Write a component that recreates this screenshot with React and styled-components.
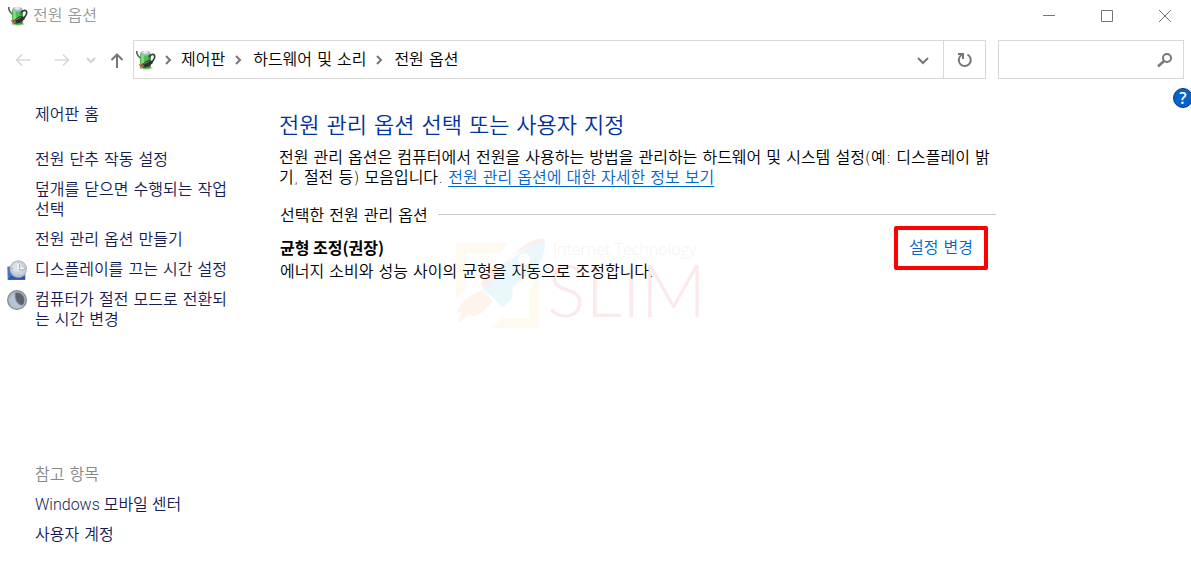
import React, { useState } from 'react';
import styled, { createGlobalStyle } from 'styled-components';

const GlobalStyle = createGlobalStyle`
  * {
    box-sizing: border-box;
  }
  body {
    margin: 0;
    background: #fff;
    color: #000;
    font-family: 'DejaVu Sans', 'Noto Sans CJK KR', sans-serif;
    font-size: 16px;
    font-weight: 350;
    line-height: 20px;
    overflow-x: hidden;
  }
  svg {
    display: block;
    flex-shrink: 0;
  }
`;

const Window = styled.div`
  min-height: 100vh;
  display: flex;
  flex-direction: column;
`;

const TitleBar = styled.header`
  display: flex;
  align-items: center;
  height: 32px;
  padding: 0 3px 0 8px;
`;

const WindowTitle = styled.span`
  flex: 1;
  margin-left: 5px;
  color: #999;
  line-height: 22px;
`;

const WindowButtons = styled.div`
  display: flex;
  gap: 12px;
`;

const IconButton = styled.button`
  display: flex;
  align-items: center;
  justify-content: center;
  width: ${(props) => props.$width || 46}px;
  padding: 0;
  border: none;
  background: none;
  color: ${(props) => props.$color || '#777'};
`;

const NavBar = styled.nav`
  display: flex;
  height: 39px;
  margin-top: 8px;
  padding: 0 7px 0 3px;
`;

const AddressBar = styled.div`
  flex: 1;
  display: flex;
  align-items: stretch;
  border: 1px solid #d9d9d9;
`;

const Crumbs = styled.div`
  flex: 1;
  display: flex;
  align-items: center;
  padding-left: 2px;
`;

const Crumb = styled.a`
  color: #000;
  text-decoration: none;
`;

const Separator = styled.span`
  display: flex;
  justify-content: center;
  width: ${(props) => (props.$first ? 25 : 28)}px;
  color: #777;
`;

const RefreshBox = styled.div`
  display: flex;
  border-left: 1px solid #d9d9d9;
`;

const SearchBox = styled.div`
  display: flex;
  align-items: center;
  width: 186px;
  margin-left: 12px;
  padding-right: 10px;
  border: 1px solid #d9d9d9;
  color: #777;
`;

const SearchInput = styled.input`
  flex: 1;
  min-width: 0;
  height: 100%;
  padding: 0 8px;
  border: none;
  outline: none;
  background: none;
  font: inherit;
`;

const Body = styled.div`
  flex: 1;
  display: flex;
`;

const Sidebar = styled.aside`
  display: flex;
  flex-direction: column;
  width: 279px;
  padding: 26px 43px 20px 7px;
`;

const TaskList = styled.ul`
  display: flex;
  flex-direction: column;
  gap: 10px;
  margin: ${(props) => (props.$bottom ? 'auto 0 0' : '25px 0 0')};
  padding: 0;
  list-style: none;
`;

const Task = styled.div`
  display: grid;
  grid-template-columns: 20px 200px;
  column-gap: 8px;
`;

const TaskIcon = styled.span`
  width: 20px;
  height: 20px;
`;

const TaskLink = styled.a`
  color: #151c55;
  text-decoration: none;
  font-family: ${(props) => (props.$latin ? "Roboto, 'Noto Sans CJK KR', sans-serif" : 'inherit')};
`;

const SeeAlso = styled.span`
  color: #888;
`;

const Content = styled.main`
  flex: 1;
  max-width: 717px;
  padding-top: 33px;
`;

const Heading = styled.h1`
  margin: 0;
  color: #003399;
  font-size: 22px;
  font-weight: 350;
  line-height: 28px;
`;

const Description = styled.p`
  margin: 8px 0 0;
`;

const InfoLink = styled.a`
  color: #0066cc;
  text-decoration: underline;
  text-decoration-thickness: 1px;
  text-underline-offset: 3px;
`;

const PlanGroup = styled.section`
  position: relative;
  margin-top: 18px;
  padding-left: 1px;
`;

const GroupTitle = styled.h2`
  display: flex;
  align-items: center;
  gap: 10px;
  margin: 0;
  font-size: 16px;
  font-weight: 350;

  &::after {
    content: '';
    flex: 1;
    height: 1px;
    margin-bottom: 3px;
    background: #c8c8c8;
  }
`;

const PlanRow = styled.div`
  display: flex;
  justify-content: space-between;
  align-items: flex-start;
  padding-right: 8px;
`;

const PlanText = styled.div`
  padding-top: 11px;
`;

const PlanName = styled.h3`
  margin: 0;
  font-family: 'Noto Sans CJK KR', sans-serif;
  font-size: 16px;
  font-weight: 700;
`;

const PlanDetail = styled.p`
  margin: 5px 0 0;
`;

const ChangeLink = styled.a`
  padding: 8px 11px;
  border: 4px solid #fe0000;
  border-radius: 2px;
  color: #0066cc;
  text-decoration: none;
`;

// sits over the plan text
const Watermark = styled.svg`
  position: absolute;
  top: 27px;
  left: 174px;
  opacity: 0.09;
  pointer-events: none;
`;

const HelpButton = styled.button`
  width: 20px;
  height: 20px;
  margin: 9px -2px 0 auto;
  padding: 0;
  border: 1px solid #003a8c;
  border-radius: 50%;
  background: #0563c9;
  color: #fff;
  font-family: 'Open Sans', sans-serif;
  font-size: 16px;
  font-weight: 600;
  line-height: 18px;
`;

const PowerIcon = () => (
  <svg width="20" height="20" viewBox="0 0 60 60" fill="none">
    <ellipse cx="30" cy="54" rx="20" ry="5" fill="#c9cdc9" />
    <path d="M12 11v41c3 7 28 7 32 0V11z" fill="#4fbf4e" />
    <path d="M16 14v42l7 2V14z" fill="#8fe08a" />
    <path d="M37 13v43l7-4V11z" fill="#2f8f38" />
    <ellipse cx="28" cy="10" rx="15" ry="7" fill="#aab6c2" />
    <ellipse cx="28" cy="7" rx="8" ry="5" fill="#dfe8f4" />
    <path d="M2 3c0 10 2 16 11 21" stroke="#5c605c" strokeWidth="5" />
    <path d="M40 21c2-8 14-11 16-3 2 9-5 10-8 19" stroke="#393939" strokeWidth="5" />
    <path d="M14 46l20-15 16 1v8L34 52l-15 1z" fill="#303030" />
    <path d="M25 41l14-7" stroke="#858585" strokeWidth="3" />
    <path d="M9 45l13-4M12 51l12-4" stroke="#b4814f" strokeWidth="4" />
  </svg>
);

const ClockIcon = () => (
  <svg width="20" height="20" viewBox="0 0 60 60">
    <path d="M1 20l20-3 34 20v22H2z" fill="#4a70d0" />
    <path d="M2 59l16-18 36 6v12z" fill="#2f54b4" />
    <circle cx="34" cy="27" r="26" fill="#b3bac2" />
    <circle cx="34" cy="26" r="22" fill="#c9d2db" />
    <circle cx="31" cy="22" r="15" fill="#d9e1e9" />
    <path d="M34 9v17h17" fill="none" stroke="#fff" strokeWidth="5" />
    <path d="M37 12v17h13" fill="none" stroke="#8492a3" strokeWidth="2" />
    <path d="M34 6v4M34 43v4M14 26h4M50 26h4" stroke="#9aa5b2" strokeWidth="3" />
  </svg>
);

const MoonIcon = () => (
  <svg width="20" height="20" viewBox="0 0 60 60">
    <circle cx="30" cy="30" r="30" fill="#85898d" />
    <circle cx="30" cy="30" r="26" fill="#b4bcc7" />
    <circle cx="31" cy="29" r="22" fill="#7c8591" />
    <path d="M24 8C5 14 3 42 22 51c8 4 18 2 24-4C31 45 20 27 24 8z" fill="#b5c3d8" />
    <path d="M27 9c20-2 32 22 19 37-15-5-22-21-19-37z" fill="#5b636d" />
  </svg>
);

const Arrow = ({ d, size = 16, stroke = 2 }) => (
  <svg width={size} height={size} viewBox="0 0 16 16" fill="none" stroke="currentColor" strokeWidth={stroke}>
    <path d={d} />
  </svg>
);

const crumbs = ['제어판', '하드웨어 및 소리', '전원 옵션'];

const tasks = [
  { label: '전원 단추 작동 설정' },
  { label: '덮개를 닫으면 수행되는 작업 선택' },
  { label: '전원 관리 옵션 만들기' },
  { label: '디스플레이를 끄는 시간 설정', icon: <ClockIcon /> },
  { label: '컴퓨터가 절전 모드로 전환되는 시간 변경', icon: <MoonIcon /> },
];

function App() {
  const [search, setSearch] = useState('');

  return (
    <Window>
      <GlobalStyle />
      <TitleBar>
        <PowerIcon />
        <WindowTitle>전원 옵션</WindowTitle>
        <WindowButtons>
          <IconButton aria-label="최소화">
            <svg width="12" height="12" stroke="currentColor"><path d="M0 5.500h12" /></svg>
          </IconButton>
          <IconButton aria-label="최대화">
            <svg width="12" height="12" fill="none" stroke="currentColor"><path d="M.5.5h11v11H.5z" /></svg>
          </IconButton>
          <IconButton aria-label="닫기">
            <svg width="12" height="12" stroke="currentColor"><path d="M0 0l12 12M12 0L0 12" /></svg>
          </IconButton>
        </WindowButtons>
      </TitleBar>

      <NavBar>
        <IconButton $width={39} $color="#d9d9d9" aria-label="뒤로">
          <Arrow d="M15.500 8H1.500M7 2.500L1.500 8L7 13.500" stroke={1.6} />
        </IconButton>
        <IconButton $width={39} $color="#d9d9d9" aria-label="앞으로">
          <Arrow d="M.5 8h14M9 2.500L14.500 8L9 13.500" stroke={1.6} />
        </IconButton>
        <IconButton $width={20} $color="#d0d0d0" aria-label="최근 위치">
          <Arrow d="M4 6l4 4 4-4" />
        </IconButton>
        <IconButton $width={32} aria-label="위로">
          <Arrow d="M8 16V2.500M2.500 8L8 2.500L13.500 8" />
        </IconButton>
        <AddressBar>
          <Crumbs>
            <PowerIcon />
            {crumbs.map((crumb, index) => (
              <React.Fragment key={crumb}>
                <Separator $first={index === 0}>
                  <Arrow d="M5 4l4 4-4 4" />
                </Separator>
                <Crumb href="#">{crumb}</Crumb>
              </React.Fragment>
            ))}
          </Crumbs>
          <IconButton $width={40} aria-label="이전 위치">
            <Arrow d="M3 6l5 5 5-5" />
          </IconButton>
          <RefreshBox>
            <IconButton $width={41} aria-label="새로 고침">
              <Arrow d="M10.500 2.700A6 6 0 1 1 4.500 3M1 2h5v5" />
            </IconButton>
          </RefreshBox>
        </AddressBar>
        <SearchBox>
          <SearchInput
            type="text"
            aria-label="검색"
            value={search}
            onChange={(e) => setSearch(e.target.value)}
          />
          <svg width="16" height="16" fill="none" stroke="currentColor" strokeWidth="2">
            <circle cx="10" cy="6" r="4" />
            <path d="M7 9l-6 5.500" strokeWidth="2.500" />
          </svg>
        </SearchBox>
      </NavBar>

      <Body>
        <Sidebar>
          <Task>
            <TaskIcon />
            <TaskLink href="#">제어판 홈</TaskLink>
          </Task>
          <TaskList>
            {tasks.map((task) => (
              <li key={task.label}>
                <Task>
                  <TaskIcon>{task.icon}</TaskIcon>
                  <TaskLink href="#">{task.label}</TaskLink>
                </Task>
              </li>
            ))}
          </TaskList>
          <TaskList $bottom>
            <li>
              <Task>
                <TaskIcon />
                <SeeAlso>참고 항목</SeeAlso>
              </Task>
            </li>
            <li>
              <Task>
                <TaskIcon />
                <TaskLink href="#" $latin>Windows 모바일 센터</TaskLink>
              </Task>
            </li>
            <li>
              <Task>
                <TaskIcon />
                <TaskLink href="#">사용자 계정</TaskLink>
              </Task>
            </li>
          </TaskList>
        </Sidebar>

        <Content>
          <Heading>전원 관리 옵션 선택 또는 사용자 지정</Heading>
          <Description>
            전원 관리 옵션은 컴퓨터에서 전원을 사용하는 방법을 관리하는 하드웨어 및 시스템 설정(예: 디스플레이 밝기, 절전 등) 모음입니다.{' '}
            <InfoLink href="#">전원 관리 옵션에 대한 자세한 정보 보기</InfoLink>
          </Description>
          <PlanGroup>
            <GroupTitle>선택한 전원 관리 옵션</GroupTitle>
            <PlanRow>
              <PlanText>
                <PlanName>균형 조정(권장)</PlanName>
                <PlanDetail>에너지 소비와 성능 사이의 균형을 자동으로 조정합니다.</PlanDetail>
              </PlanText>
              <ChangeLink href="#">설정 변경</ChangeLink>
            </PlanRow>
            <Watermark width="260" height="100" viewBox="0 0 260 100" aria-hidden="true">
              <path d="M7 10h49L47 20H13v36L3 66V14q0-4 4-4z" fill="#ffd25a" />
              <path d="M76 58l10-14v47q0 4-4 4H37l13-10h26z" fill="#ffd25a" />
              <path d="M92 6C93 28 80 42 60 53l-1 13-10 9-7-9-8-6-5-5 6-5C46 42 60 18 92 6z" fill="#29abe2" />
              <path d="M92 6C82 4 66 12 54 31c-4 5-10 4-15 4-5 1-7 5-11 17l7 3C42 44 52 22 78 13q8-1 14-7z" fill="#f04b38" />
              <circle cx="71" cy="26" r="6" fill="#fff" />
              <path d="M29 57l11 11-10 11-8 4-6-1-12 9 5-12-6 1 8-13z" fill="#f58a3a" />
              <text x="100" y="22" fill="#777" fontFamily="Open Sans, sans-serif" fontSize="16" fontWeight="300">Internet Technology</text>
              <text x="94" y="84" fill="#e01a2d" fontFamily="Lato, sans-serif" fontSize="72" fontWeight="300">SLIM</text>
            </Watermark>
          </PlanGroup>
        </Content>
        <HelpButton aria-label="도움말">?</HelpButton>
      </Body>
    </Window>
  );
}

export default App;
